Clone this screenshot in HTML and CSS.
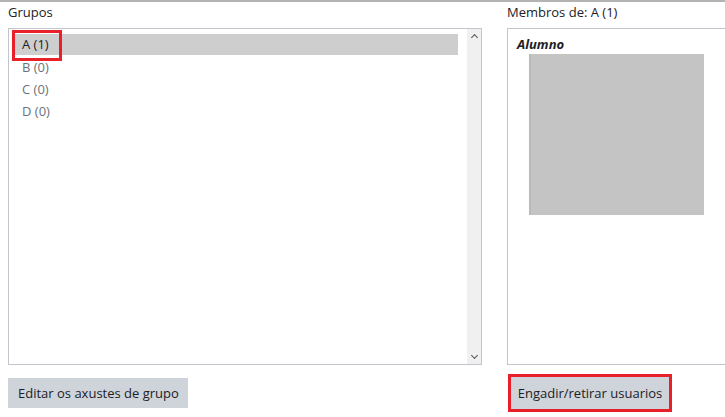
FILE: index.html
```html
<!DOCTYPE html>
<html lang="gl">
<head>
    <meta charset="UTF-8">
    <meta name="viewport" content="width=device-width, initial-scale=1.0">
    <title>Grupos</title>
    <link rel="stylesheet" href="styles.css">
</head>
<body>
    <div class="page">
        <div class="column groups-column">
            <label class="field-label">Grupos</label>
            <div class="select-box">
                <ul class="options">
                    <li class="option selected">A (1)<span class="highlight-box"></span></li>
                    <li class="option">B (0)</li>
                    <li class="option">C (0)</li>
                    <li class="option">D (0)</li>
                </ul>
                <div class="scrollbar">
                    <span class="arrow up"></span>
                    <span class="arrow down"></span>
                </div>
            </div>
            <div class="actions">
                <button class="btn">Editar os axustes de grupo</button>
            </div>
        </div>
        <div class="column members-column">
            <label class="field-label">Membros de: A (1)</label>
            <div class="members-box">
                <div class="role">Alumno</div>
                <div class="member-placeholder"></div>
            </div>
            <div class="actions">
                <span class="button-highlight">
                    <button class="btn">Engadir/retirar usuarios</button>
                </span>
            </div>
        </div>
    </div>
</body>
</html>
```

FILE: styles.css
```css
* {
    box-sizing: border-box;
    margin: 0;
    padding: 0;
}

html, body {
    height: 100%;
    overflow: hidden;
}

body {
    font-family: "Open Sans", "Liberation Sans", sans-serif;
    font-size: 13px;
    color: #1d2125;
    background-color: #fff;
    border-top: 2px solid #b3b3b3;
}

.page {
    display: flex;
    gap: 25px;
    padding-left: 8px;
    width: 725px;
}

.column {
    display: flex;
    flex-direction: column;
}

.groups-column {
    width: 474px;
    flex-shrink: 0;
}

.members-column {
    flex: 1;
}

.field-label {
    display: block;
    height: 26px;
    line-height: 20px;
    white-space: nowrap;
}

.select-box {
    display: flex;
    height: 337px;
    border: 1px solid #c2c5cc;
}

.options {
    list-style: none;
    flex: 1;
    padding: 5px 9px 0 3px;
    color: #6a737b;
}

.option {
    height: 22px;
    line-height: 22px;
    padding-left: 10px;
}

.option.selected {
    position: relative;
    background-color: #cecece;
    color: #1d2125;
    height: 21px;
    line-height: 21px;
    margin-bottom: 1px;
}

.highlight-box {
    position: absolute;
    left: 0;
    top: -4px;
    width: 50px;
    height: 31px;
    border: 3px solid #e8202a;
}

.scrollbar {
    width: 14px;
    background-color: #f0f0f0;
    display: flex;
    flex-direction: column;
    justify-content: space-between;
    align-items: center;
    padding: 4px 0 6px;
}

.arrow {
    width: 5px;
    height: 5px;
    border-left: 1.5px solid #555;
    border-top: 1.5px solid #555;
}

.arrow.up {
    transform: rotate(45deg);
    margin-top: 2px;
}

.arrow.down {
    transform: rotate(225deg);
}

.members-box {
    height: 337px;
    border: 1px solid #c2c5cc;
    border-right: none;
    padding: 6px 9px;
}

.role {
    font-weight: 700;
    font-style: italic;
    line-height: 19px;
}

.member-placeholder {
    width: 175px;
    height: 161px;
    margin-left: 12px;
    background-color: #c4c4c4;
    border-left: 2px solid #bababa;
}

.actions {
    display: flex;
    padding-top: 13px;
}

.btn {
    font-family: inherit;
    font-size: 13px;
    color: #1d2125;
    background-color: #ced4da;
    border: none;
    height: 30px;
    padding: 0 10px;
    width: 180px;
    white-space: nowrap;
}

.button-highlight {
    display: flex;
    margin-top: -4px;
    margin-left: 1px;
    border: 3px solid #e8202a;
}

.button-highlight .btn {
    width: 158px;
    height: 32px;
    padding: 0 6px;
}
```
